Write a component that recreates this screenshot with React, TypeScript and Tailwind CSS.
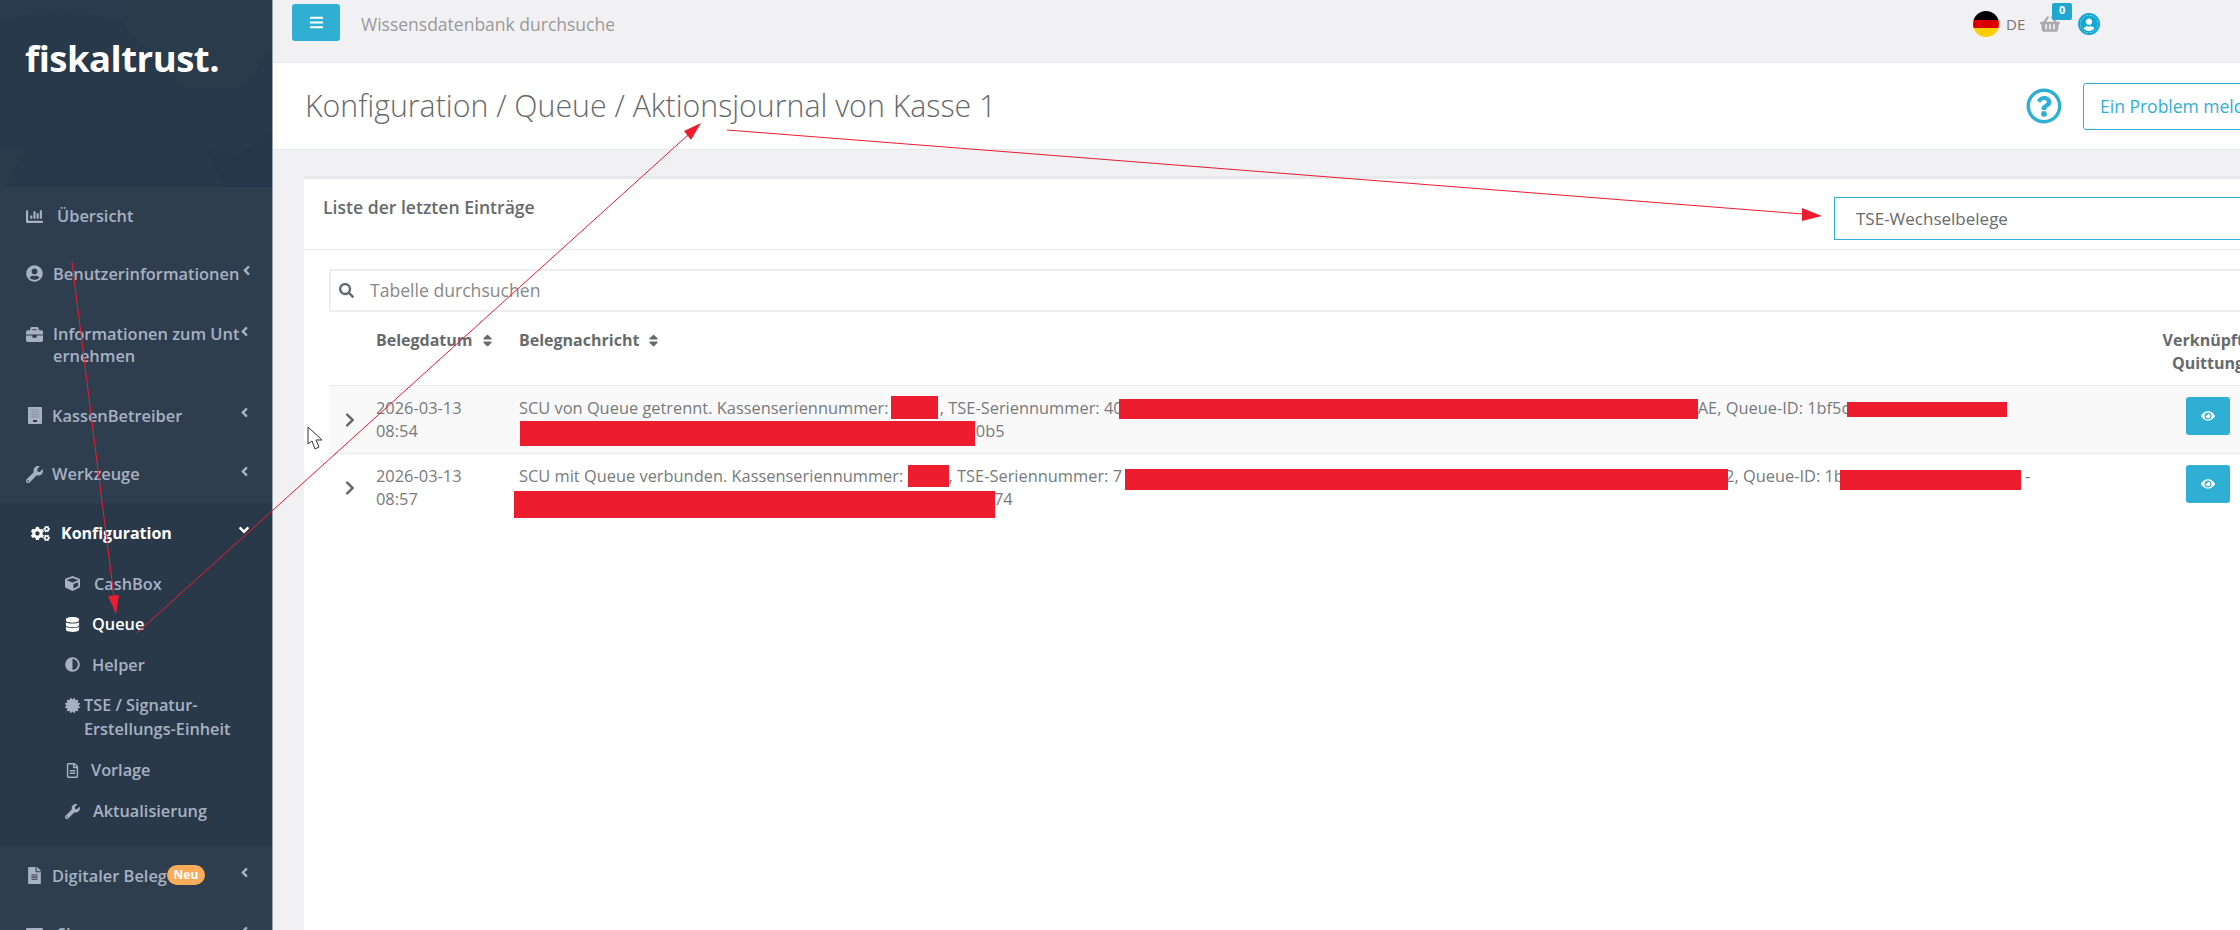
import React from "react";
import {
  FaChartBar, FaUserCircle, FaBriefcase, FaWrench, FaCogs, FaCube, FaDatabase, FaAdjust,
  FaCertificate, FaRegFileAlt, FaFileAlt, FaAngleLeft, FaAngleDown, FaSort, FaSearch, FaChevronRight,
  FaEye, FaBars, FaShoppingBasket, FaRegQuestionCircle, FaCreditCard,
} from "react-icons/fa";

const font = { fontFamily: '"Open Sans", sans-serif' };

function TerminalIcon() {
  return (
    <svg width="14" height="17" viewBox="0 0 14 17">
      <rect x="0" y="0" width="14" height="17" rx="1" fill="#a7b1c2" />
      <path d="M2 2.5H12M2 5H12M2 7.5H12M2 10H12M4.5 2V11M7 2V11M9.5 2V11" stroke="#8b96a8" strokeWidth="0.8" />
      <rect x="5" y="13" width="4" height="2" fill="#2f3e4f" />
    </svg>
  );
}

function Row({ icon, label, h, badge, textGap, noChevron }: { icon: React.ReactNode; label: React.ReactNode; h: string; badge?: boolean; textGap: string; noChevron?: boolean }) {
  return (
    <div className={`flex items-center pl-[26px] pr-[20px] text-[#a7b1c2] font-semibold text-[16.4px] leading-[22px] ${h}`}>
      <div className={`flex flex-1 items-start ${textGap}`}>
        <span className="w-[17px] h-[22px] flex items-center justify-center text-[17px] shrink-0">{icon}</span>
        <span className="whitespace-nowrap">{label}</span>
        {badge && (
          <span className="-ml-[9px] h-[20px] w-[38px] shrink-0 rounded-full bg-[#f8ac59] text-white text-[12px] font-bold leading-[20px] text-center">Neu</span>
        )}
      </div>
      {!noChevron && (
        <div className="h-full flex items-center -translate-y-[3px]">
          <FaAngleLeft className="text-[15px]" />
        </div>
      )}
    </div>
  );
}

function SubRow({ icon, label, h, textGap, active }: { icon: React.ReactNode; label: React.ReactNode; h: string; textGap: string; active?: boolean }) {
  return (
    <div className={`flex items-center pl-[65px] font-semibold text-[16.3px] leading-[24px] ${h} ${active ? "text-white" : "text-[#a7b1c2]"}`}>
      <div className={`flex items-start ${textGap}`}>
        <span className="w-[15px] h-[24px] flex items-center justify-center text-[15px] shrink-0">{icon}</span>
        <span className="whitespace-nowrap">{label}</span>
      </div>
    </div>
  );
}

function Sidebar() {
  return (
    <aside className="w-[272px] shrink-0 h-[930px] overflow-hidden bg-[#2f3e4f] border-r border-[#9aa3ad] box-content">
      <div className="h-[187px] bg-[#27394a] relative overflow-hidden pl-[25px] pt-[33px]">
        <svg className="absolute inset-0" width="272" height="187" viewBox="0 0 272 187">
          <polygon points="120,20 140,0 272,0 272,50 240,88 180,88" fill="#2a3c4c" />
          <polygon points="0,0 140,0 120,20 60,10 0,20" fill="#293b4c" />
          <polygon points="207,150 240,155 272,130 272,187 225,187" fill="#25374a" />
          <polygon points="0,150 25,150 5,187 0,187" fill="#2a3c4c" />
        </svg>
        <div className="relative text-white text-[36.5px] font-bold leading-[50px] tracking-[-0.5px]">fiskaltrust.</div>
      </div>
      <Row h="h-[58px]" textGap="gap-[14px]" noChevron icon={<FaChartBar />} label="Übersicht" />
      <Row h="h-[57px]" textGap="gap-[10px]" icon={<FaUserCircle />} label="Benutzerinformationen" />
      <div className="h-[84px] flex pl-[26px] pr-[20px] pt-[21px] text-[#a7b1c2] font-semibold text-[16.4px] leading-[22px]">
        <div className="flex flex-1 items-start gap-[10px]">
          <span className="w-[17px] h-[22px] flex items-center justify-center text-[17px] shrink-0"><FaBriefcase /></span>
          <span className="whitespace-nowrap">Informationen zum Unt<br />ernehmen</span>
        </div>
        <FaAngleLeft className="text-[15px] mt-[1px] -ml-[10px]" />
      </div>
      <Row h="h-[59px]" textGap="gap-[9px]" icon={<TerminalIcon />} label="KassenBetreiber" />
      <Row h="h-[58px]" textGap="gap-[9px]" icon={<FaWrench />} label="Werkzeuge" />
      <div className="bg-[#29394a] h-[343px]">
        <div className="h-[60px] flex items-center pl-[31px] pr-[20px] text-white font-bold text-[16px]">
          <div className="flex flex-1 items-center gap-[11px]">
            <FaCogs className="text-[19px]" />
            <span>Konfiguration</span>
          </div>
          <FaAngleDown className="text-[16px] -translate-y-[3px]" />
        </div>
        <SubRow h="h-[41px]" textGap="gap-[14px]" icon={<FaCube />} label="CashBox" />
        <SubRow h="h-[40px]" textGap="gap-[12px]" active icon={<FaDatabase />} label="Queue" />
        <SubRow h="h-[41px]" textGap="gap-[12px]" icon={<FaAdjust />} label="Helper" />
        <SubRow h="h-[64px]" textGap="gap-[4px]" icon={<FaCertificate />} label={<>TSE / Signatur-<br />Erstellungs-Einheit</>} />
        <SubRow h="h-[42px]" textGap="gap-[11px]" icon={<FaRegFileAlt />} label="Vorlage" />
        <SubRow h="h-[40px]" textGap="gap-[13px]" icon={<FaWrench />} label="Aktualisierung" />
      </div>
      <Row h="h-[59px]" textGap="gap-[9px]" badge icon={<FaFileAlt />} label="Digitaler Beleg" />
      <Row h="h-[58px]" textGap="gap-[14px]" icon={<FaCreditCard />} label="Shop" />
    </aside>
  );
}

function TopBar() {
  return (
    <div className="h-[63px] border-b border-[#e3e8ec] flex items-start bg-[#f1f1f4] relative">
      <div className="ml-[19px] mt-[4px] w-[48px] h-[37px] rounded-[3px] bg-[#2fafd3] text-white flex items-center justify-center text-[15px]"><FaBars /></div>
      <div className="ml-[21px] mt-[12px] w-[253px] overflow-hidden whitespace-nowrap text-[17.5px] leading-[24px] text-[#9a9a9a]">Wissensdatenbank durchsuchen</div>
      <div className="ml-[1359px] mt-[11px] flex items-center">
        <div className="w-[26px] h-[26px] rounded-full overflow-hidden flex flex-col">
          <div className="h-1/3 bg-black" />
          <div className="h-1/3 bg-[#dd0000]" />
          <div className="h-1/3 bg-[#ffce00]" />
        </div>
        <span className="ml-[7px] text-[15px] text-[#777]">DE</span>
        <div className="ml-[15px] relative w-[20px] h-[20px] flex items-center justify-center text-[#aaa] text-[20px]">
          <FaShoppingBasket />
          <span className="absolute left-[12px] -top-[11px] w-[20px] h-[17px] rounded-[2px] bg-[#1ea8cf] text-white text-[11px] font-bold leading-[14px] text-center">0</span>
        </div>
        <div className="ml-[18px] w-[22px] h-[22px] rounded-full border-[2px] border-[#12a8d0] bg-white text-[#12a8d0] overflow-hidden flex items-center justify-center text-[20px]">
          <FaUserCircle />
        </div>
      </div>
    </div>
  );
}

function PageHead() {
  return (
    <div className="h-[87px] bg-white border-b border-[#e7eaec] flex items-center pl-[32px] relative">
      <h1 className="text-[30.3px] font-light text-[#676a6c] whitespace-nowrap w-[1721px] shrink-0 leading-[40px]">Konfiguration / Queue / Aktionsjournal von Kasse 1</h1>
      <FaRegQuestionCircle className="text-[#2fafd3] text-[36px] shrink-0" />
      <div className="ml-[21px] h-[47px] w-[220px] shrink-0 border-[1px] border-[#2fafd3] rounded-[3px] text-[#2fafd3] text-[17.5px] flex items-center pl-[16px] whitespace-nowrap">Ein Problem melden</div>
    </div>
  );
}

function Spacer({ w }: { w: string }) {
  return <span className={`inline-block ${w}`} />;
}

function TableRow({ date, time, l1, l2, shaded }: { date: string; time: string; l1: React.ReactNode; l2: React.ReactNode; shaded?: boolean }) {
  return (
    <div className={`flex h-[68px] border-b ${shaded ? "bg-[#f9f9f9] border-[#e7eaec]" : "border-transparent"} text-[#777a7c] text-[16.4px] leading-[23px]`}>
      <div className="w-[47px] pl-[13px] flex items-center text-[#676a6c] text-[16px]"><FaChevronRight /></div>
      <div className="w-[143px] pt-[10px] whitespace-nowrap">{date}<br />{time}</div>
      <div className="w-[1627px] pt-[10px] whitespace-nowrap">{l1}<br />{l2}</div>
      <div className="flex-1 pt-[11px] pl-[40px]">
        <div className="w-[44px] h-[38px] rounded-[3px] bg-[#2fafd3] text-white flex items-center justify-center text-[14px]"><FaEye /></div>
      </div>
    </div>
  );
}

function Card() {
  return (
    <div className="mt-[26px] ml-[31px] bg-white border-t-[3px] border-[#e7eaec] h-[754px]">
      <div className="h-[71px] border-b border-[#e7eaec] flex items-start relative">
        <div className="ml-[19px] mt-[16px] text-[#676a6c] font-semibold text-[17.6px] leading-[24px] w-[1511px] shrink-0 whitespace-nowrap">Liste der letzten Einträge</div>
        <div className="mt-[18px] w-[500px] h-[43px] shrink-0 border border-[#2fafd3] text-[#676a6c] text-[17px] flex items-center pl-[21px]">TSE-Wechselbelege</div>
      </div>
      <div className="pl-[25px] pt-[19px]">
        <div className="h-[43px] border-[2px] border-[#eeeeee] flex items-center pl-[8px] text-[#888] text-[17.6px] w-[2200px] leading-[24px]">
          <FaSearch className="text-[#5f6b73] text-[15px]" />
          <span className="ml-[16px] -translate-y-[1px]">Tabelle durchsuchen</span>
        </div>
        <div className="flex h-[74px] border-b border-[#e7eaec] text-[#676a6c] font-bold text-[16px] leading-[23px] w-[2200px]">
          <div className="w-[47px]" />
          <div className="w-[143px] pt-[17px] flex items-start gap-[7px]">Belegdatum <FaSort className="mt-[4px] text-[15px]" /></div>
          <div className="w-[1627px] pt-[17px] flex items-start gap-[7px]">Belegnachricht <FaSort className="mt-[4px] text-[15px]" /></div>
          <div className="w-[124px] pt-[17px] text-center">Verknüpfte<br />Quittung</div>
        </div>
        <div className="w-[2200px]">
          <TableRow shaded date="2026-03-13" time="08:54"
            l1={<>SCU von Queue getrennt. Kassenseriennummer: <Spacer w="w-[47px]" />, TSE-Seriennummer: 40<Spacer w="w-[575px]" />AE, Queue-ID: 1bf5c</>}
            l2={<>c<Spacer w="w-[449px]" />0b5</>} />
          <TableRow date="2026-03-13" time="08:57"
            l1={<>SCU mit Queue verbunden. Kassenseriennummer: <Spacer w="w-[41px]" />, TSE-Seriennummer: 7<Spacer w="w-[603px]" />2, Queue-ID: 1b<Spacer w="w-[181px]" />-</>}
            l2={<><Spacer w="w-[475px]" />74</>} />
        </div>
      </div>
    </div>
  );
}

function Annotations() {
  return (
    <>
      <div className="absolute left-[891px] top-[396px] w-[47px] h-[23px] bg-[#ed1c2e]" />
      <div className="absolute left-[1119px] top-[399px] w-[579px] h-[20px] bg-[#ed1c2e]" />
      <div className="absolute left-[1847px] top-[402px] w-[160px] h-[15px] bg-[#ed1c2e]" />
      <div className="absolute left-[520px] top-[421px] w-[455px] h-[25px] bg-[#ed1c2e]" />
      <div className="absolute left-[908px] top-[465px] w-[41px] h-[22px] bg-[#ed1c2e]" />
      <div className="absolute left-[1125px] top-[469px] w-[603px] h-[21px] bg-[#ed1c2e]" />
      <div className="absolute left-[1840px] top-[470px] w-[181px] h-[20px] bg-[#ed1c2e]" />
      <div className="absolute left-[514px] top-[491px] w-[481px] h-[27px] bg-[#ed1c2e]" />
      <svg className="absolute left-0 top-0 pointer-events-none" width="2240" height="930" viewBox="0 0 2240 930">
        <line x1="72" y1="262" x2="114" y2="597" stroke="#ed1c2e" strokeWidth="1" />
        <polygon points="116,614 108,596 119,595" fill="#ed1c2e" />
        <line x1="137" y1="633" x2="688" y2="135" stroke="#ed1c2e" strokeWidth="1" />
        <polygon points="701,123 684,131 691,140" fill="#ed1c2e" />
        <line x1="727" y1="130" x2="1803" y2="214" stroke="#ed1c2e" strokeWidth="1" />
        <polygon points="1822,216 1802,208 1802,221" fill="#ed1c2e" />
        <path d="M308 427 L308 444 L312 441 L315 449 L319 447 L316 440 L322 440 Z" fill="#fff" stroke="#333" strokeWidth="1" />
      </svg>
    </>
  );
}

export default function App() {
  return (
    <div style={font} className="relative w-[2240px] h-[930px] overflow-hidden bg-[#f1f1f4] flex">
      <Sidebar />
      <main className="w-[2100px] shrink-0">
        <TopBar />
        <PageHead />
        <Card />
      </main>
      <Annotations />
    </div>
  );
}
